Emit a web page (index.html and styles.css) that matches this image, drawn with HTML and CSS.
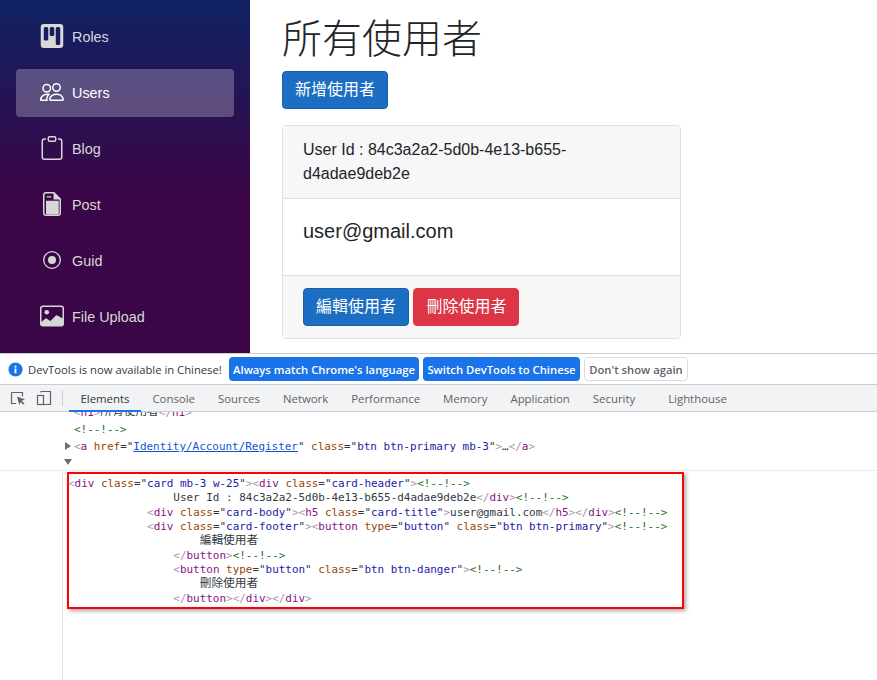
FILE: index.html
```html
<!DOCTYPE html>
<html lang="zh-Hant">
<head>
<meta charset="utf-8">
<title>Users</title>
<link rel="stylesheet" href="styles.css">
</head>
<body>
<div class="page">
  <div class="app">
    <nav class="sidebar">
      <a class="nav-item"><svg class="ico" viewBox="0 0 16 16"><path d="M2.5 0a2 2 0 0 0-2 2v12a2 2 0 0 0 2 2h11a2 2 0 0 0 2-2V2a2 2 0 0 0-2-2h-11zm5 2h1a1 1 0 0 1 1 1v4a1 1 0 0 1-1 1h-1a1 1 0 0 1-1-1V3a1 1 0 0 1 1-1zm-5 1a1 1 0 0 1 1-1h1a1 1 0 0 1 1 1v7a1 1 0 0 1-1 1h-1a1 1 0 0 1-1-1V3zm9-1h1a1 1 0 0 1 1 1v10a1 1 0 0 1-1 1h-1a1 1 0 0 1-1-1V3a1 1 0 0 1 1-1z"/></svg><span class="nav-label">Roles</span></a>
      <a class="nav-item active"><svg class="ico" viewBox="0 0 16 16"><path d="M15 14s1 0 1-1-1-4-5-4-5 3-5 4 1 1 1 1h8Zm-7.978-1A.261.261 0 0 1 7 12.996c.001-.264.167-1.03.76-1.72C8.312 10.629 9.282 10 11 10c1.717 0 2.687.63 3.24 1.276.593.69.758 1.457.76 1.72l-.008.002a.274.274 0 0 1-.014.002H7.022ZM11 7a2 2 0 1 0 0-4 2 2 0 0 0 0 4Zm3-2a3 3 0 1 1-6 0 3 3 0 0 1 6 0ZM6.936 9.28a5.88 5.88 0 0 0-1.23-.247A7.35 7.35 0 0 0 5 9c-4 0-5 3-5 4 0 .667.333 1 1 1h4.216A2.238 2.238 0 0 1 5 13c0-1.01.377-2.042 1.09-2.904.243-.294.526-.569.846-.816ZM4.92 10A5.493 5.493 0 0 0 4 13H1c0-.26.164-1.03.76-1.724.545-.636 1.492-1.256 3.16-1.275ZM1.5 5.5a3 3 0 1 1 6 0 3 3 0 0 1-6 0Zm3-2a2 2 0 1 0 0 4 2 2 0 0 0 0-4Z"/></svg><span class="nav-label">Users</span></a>
      <a class="nav-item"><svg class="ico" viewBox="0 0 16 16"><path d="M4 1.5H3a2 2 0 0 0-2 2V14a2 2 0 0 0 2 2h10a2 2 0 0 0 2-2V3.5a2 2 0 0 0-2-2h-1v1h1a1 1 0 0 1 1 1V14a1 1 0 0 1-1 1H3a1 1 0 0 1-1-1V3.5a1 1 0 0 1 1-1h1v-1z"/><path d="M9.5 1a.5.5 0 0 1 .5.5v1a.5.5 0 0 1-.5.5h-3a.5.5 0 0 1-.5-.5v-1a.5.5 0 0 1 .5-.5h3zm-3-1A1.5 1.5 0 0 0 5 1.5v1A1.5 1.5 0 0 0 6.5 4h3A1.5 1.5 0 0 0 11 2.5v-1A1.5 1.5 0 0 0 9.5 0h-3z"/></svg><span class="nav-label">Blog</span></a>
      <a class="nav-item"><svg class="ico" viewBox="0 0 16 16"><path d="M4 0h5.5L14 4.5V14a2 2 0 0 1-2 2H4a2 2 0 0 1-2-2V2a2 2 0 0 1 2-2zm0 1a1 1 0 0 0-1 1v12a1 1 0 0 0 1 1h8a1 1 0 0 0 1-1V5H9V1H4zm.5 4.9h7.6a.4.4 0 0 1 .4.4v8a.5.5 0 0 1-.5.5H4.5a.5.5 0 0 1-.5-.5V6.3a.4.4 0 0 1 .5-.4zM4.5 2.8h3v.8h-3z"/></svg><span class="nav-label">Post</span></a>
      <a class="nav-item"><svg class="ico" viewBox="0 0 24 24"><path d="M12 20.5a8.500 8.500 0 1 1 0-17 8.500 8.500 0 0 1 0 17zm0 1.500a10 10 0 1 0 0-20 10 10 0 0 0 0 20z" transform="translate(1.200 1.200) scale(.9)"/><circle cx="12" cy="12" r="4"/></svg><span class="nav-label">Guid</span></a>
      <a class="nav-item"><svg class="ico" viewBox="0 0 16 16"><path d="M6.002 5.500a1.500 1.500 0 1 1-3 0 1.500 1.500 0 0 1 3 0z"/><path d="M2.002 1a2 2 0 0 0-2 2v10a2 2 0 0 0 2 2h12a2 2 0 0 0 2-2V3a2 2 0 0 0-2-2h-12zm12 1a1 1 0 0 1 1 1v6.500l-3.777-1.947a.5.5 0 0 0-.577.093l-3.710 3.710-2.660-1.772a.5.5 0 0 0-.630.062L1.002 12V3a1 1 0 0 1 1-1h12z"/></svg><span class="nav-label">File Upload</span></a>
    </nav>
    <main class="content">
      <h1 class="title">所有使用者</h1>
      <a class="btn btn-primary">新增使用者</a>
      <section class="card">
        <div class="card-header">User Id : 84c3a2a2-5d0b-4e13-b655-d4adae9deb2e</div>
        <div class="card-body"><h5 class="card-title">user@gmail.com</h5></div>
        <div class="card-footer">
          <button class="btn btn-primary">編輯使用者</button>
          <button class="btn btn-danger">刪除使用者</button>
        </div>
      </section>
    </main>
  </div>
  <div class="devtools">
    <div class="infobar">
      <svg class="info-ico" viewBox="0 0 16 16"><circle cx="8" cy="8" r="7.500" fill="#1a73e8"/><rect x="7" y="7" width="2" height="5" fill="#fff"/><rect x="7" y="4" width="2" height="2" fill="#fff"/></svg>
      <span class="info-text">DevTools is now available in Chinese!</span>
      <button class="dt-btn dt-primary">Always match Chrome's language</button>
      <button class="dt-btn dt-primary">Switch DevTools to Chinese</button>
      <button class="dt-btn dt-plain">Don't show again</button>
    </div>
    <div class="tabbar">
      <div class="tool-icons">
        <svg class="tool" viewBox="0 0 18 18"><path d="M2.500 3.500h11v4M7 14.500H2.500v-11" fill="none" stroke="#5f6368" stroke-width="1.200"/><path d="M8 7.500l8 3-3.300 1.300 2.800 2.800-1.100 1.100-2.800-2.800L10.300 16z" fill="#5f6368"/></svg>
        <svg class="tool" viewBox="0 0 18 18"><path d="M6 3.500V2.500h9.500v13H9" fill="none" stroke="#5f6368" stroke-width="1.200"/><rect x="2.500" y="6.500" width="6" height="9" fill="none" stroke="#5f6368" stroke-width="1.200"/></svg>
      </div>
      <span class="tab-sep"></span>
      <div class="tabs">
        <span class="tab tab-active">Elements</span>
        <span class="tab">Console</span>
        <span class="tab">Sources</span>
        <span class="tab">Network</span>
        <span class="tab">Performance</span>
        <span class="tab">Memory</span>
        <span class="tab">Application</span>
        <span class="tab">Security</span>
        <span class="tab tab-last">Lighthouse</span>
      </div>
    </div>
    <div class="tree-top">
<div class="line l-h1"><span class="b">&lt;</span><span class="t">h1</span><span class="b">&gt;</span><span class="cjk">所有使用者</span><span class="b">&lt;/</span><span class="t">h1</span><span class="b">&gt;</span></div>
<div class="line l-cm"><span class="c">&lt;!--!--&gt;</span></div>
<div class="line l-a"><i class="tri tri-r"></i><span class="b">&lt;</span><span class="t">a</span> <span class="a">href</span>="<span class="link">Identity/Account/Register</span>" <span class="a">class</span>="<span class="v">btn btn-primary mb-3</span>"<span class="b">&gt;</span>…<span class="b">&lt;/</span><span class="t">a</span><span class="b">&gt;</span></div>
<div class="line l-tri"><i class="tri tri-d"></i></div>
    </div>
    <div class="tree-bottom">
      <div class="gutter"></div>
      <pre class="selected"><code class="code"><span class="b">&lt;</span><span class="t">div</span> <span class="a">class</span>="<span class="v">card mb-3 w-25</span>"<span class="b">&gt;&lt;</span><span class="t">div</span> <span class="a">class</span>="<span class="v">card-header</span>"<span class="b">&gt;</span><span class="c">&lt;!--!--&gt;</span>
                User Id : 84c3a2a2-5d0b-4e13-b655-d4adae9deb2e<span class="b">&lt;/</span><span class="t">div</span><span class="b">&gt;</span><span class="c">&lt;!--!--&gt;</span>
            <span class="b">&lt;</span><span class="t">div</span> <span class="a">class</span>="<span class="v">card-body</span>"<span class="b">&gt;&lt;</span><span class="t">h5</span> <span class="a">class</span>="<span class="v">card-title</span>"<span class="b">&gt;</span>user@gmail.com<span class="b">&lt;/</span><span class="t">h5</span><span class="b">&gt;&lt;/</span><span class="t">div</span><span class="b">&gt;</span><span class="c">&lt;!--!--&gt;</span>
            <span class="b">&lt;</span><span class="t">div</span> <span class="a">class</span>="<span class="v">card-footer</span>"<span class="b">&gt;&lt;</span><span class="t">button</span> <span class="a">type</span>="<span class="v">button</span>" <span class="a">class</span>="<span class="v">btn btn-primary</span>"<span class="b">&gt;</span><span class="c">&lt;!--!--&gt;</span>
                    <span class="cjk">編輯使用者</span>
                <span class="b">&lt;/</span><span class="t">button</span><span class="b">&gt;</span><span class="c">&lt;!--!--&gt;</span>
                <span class="b">&lt;</span><span class="t">button</span> <span class="a">type</span>="<span class="v">button</span>" <span class="a">class</span>="<span class="v">btn btn-danger</span>"<span class="b">&gt;</span><span class="c">&lt;!--!--&gt;</span>
                    <span class="cjk">刪除使用者</span>
                <span class="b">&lt;/</span><span class="t">button</span><span class="b">&gt;&lt;/</span><span class="t">div</span><span class="b">&gt;&lt;/</span><span class="t">div</span><span class="b">&gt;</span></code></pre>
    </div>
  </div>
</div>
</body>
</html>
```
FILE: styles.css
```css
* { box-sizing: border-box; }
html, body { margin: 0; padding: 0; background: #fff; }
body { font-family: "Liberation Sans", "Noto Sans CJK TC", sans-serif; overflow: hidden; }
.page { width: 877px; height: 680px; display: flex; flex-direction: column; overflow: hidden; }

.app { height: 353px; display: flex; flex: none; overflow: hidden; }
.sidebar {
  width: 250px; flex: none; padding: 13px 16px 0;
  display: flex; flex-direction: column; gap: 8px;
  background: linear-gradient(180deg, #0f2263 0, #3a0647 190px);
}
.nav-item {
  height: 48px; flex: none; display: flex; align-items: center;
  padding: 0 0 2px 24px; border-radius: 4px;
  color: #d7d7d7; font-size: 14.400px; fill: #d7d7d7;
}
.nav-item.active { background: rgba(255,255,255,.25); color: #fff; fill: #fff; }
.nav-label { padding-top: 2px; }
.ico { width: 24px; height: 24px; margin-right: 8px; flex: none; }

.content { flex: 1; padding: 0 32px; min-width: 0; }
.title {
  margin: 12px 0 11px; font-size: 40px; line-height: 48px; font-weight: 300;
  color: #212529; font-family: "Noto Sans CJK TC", sans-serif;
}
.btn {
  display: inline-block; height: 38px; padding: 4px 12px 8px; border: 1px solid transparent; border-radius: 4px;
  font: 16px/24px "Noto Sans CJK TC", sans-serif; color: #fff; vertical-align: middle; width: 106px; text-align: center;
}
.btn-primary { background: #1b6ec2; border-color: #1861ac; }
.btn-danger { background: #dc3545; border-color: #dc3545; }
.card { margin-top: 16px; width: 399px; border: 1px solid #dfdfdf; border-radius: 4px; color: #212529; overflow: hidden; }
.card-header { background: #f7f7f7; padding: 12px 20px; font-size: 16px; line-height: 24px; border-bottom: 1px solid #dfdfdf; }
.card-body { height: 76px; padding: 20px; }
.card-title { margin: 0; font-size: 20px; line-height: 24px; font-weight: 400; }
.card-footer { background: #f7f7f7; padding: 12px 20px; height: 63px; border-top: 1px solid #dfdfdf; font-size: 16px; }
.card-footer .btn { padding-bottom: 10px; }

.devtools { flex: 1; display: flex; flex-direction: column; border-top: 1px solid #cbcdd1; font-family: "Open Sans", sans-serif; color: #5f6368; min-height: 0; }
.infobar { height: 31px; flex: none; display: flex; align-items: center; padding: 0 0 0 8px; border-bottom: 1px solid #cbcdd1; background: #fff; }
.info-ico { width: 15px; height: 15px; margin-right: 5px; flex: none; }
.info-text { font-size: 11.250px; color: #303942; width: 201px; white-space: nowrap; }
.dt-btn { height: 24px; border-radius: 4px; font: 600 11.250px "Open Sans", sans-serif; padding: 0; white-space: nowrap; margin-right: 4px; }
.dt-primary { background: #1a73e8; color: #fff; border: 0; }
.dt-primary:nth-of-type(1) { width: 190px; }
.dt-primary:nth-of-type(2) { width: 157px; }
.dt-plain { background: #fff; color: #5f6368; border: 1px solid #dadce0; width: 104px; }
.tabbar { height: 27px; flex: none; display: flex; align-items: stretch; background: #f1f3f4; border-bottom: 1px solid #cbcdd1; }
.tool-icons { display: flex; align-items: center; gap: 8px; padding-left: 9px; width: 62px; }
.tool { width: 18px; height: 18px; flex: none; }
.tab-sep { width: 1px; height: 16px; margin-top: 5px; background: #cbcdd1; flex: none; }
.tabs { display: flex; margin-left: 6px; }
.tab { font-size: 11.380px; line-height: 27px; padding: 0 11.500px; color: #5f6368; white-space: nowrap; position: relative; }
.tab-active { color: #303942; }
.tab-active::after { content: ""; position: absolute; left: 0; right: 0; bottom: -1px; height: 2px; background: #1a73e8; }
.tab-last { margin-left: 10px; }

.tree-top { height: 59px; flex: none; overflow: hidden; border-bottom: 1px solid #ececec; font: 10.950px/17px "DejaVu Sans Mono", "Noto Sans CJK TC", monospace; color: #303942; }
.line { height: 17px; white-space: pre; position: relative; }
.l-h1 { margin-top: -8px; padding-left: 74px; }
.l-cm, .l-a { padding-left: 74px; }
.tri { position: absolute; width: 0; height: 0; }
.tri-r { left: 65px; top: 4px; border-left: 6px solid #6e6e6e; border-top: 4px solid transparent; border-bottom: 4px solid transparent; }
.tri-d { left: 64px; top: 4px; border-top: 6px solid #6e6e6e; border-left: 4px solid transparent; border-right: 4px solid transparent; }
.tree-bottom { flex: 1; display: flex; min-height: 0; }
.gutter { width: 63px; flex: none; border-right: 1px solid #e4e4e4; }
.selected {
  margin: 1px 0 0 4px; width: 617px; height: 137px; border: 2px solid #f00; padding: 3px 0 0 0;
  font: 10.950px/14.400px "DejaVu Sans Mono", "Noto Sans CJK TC", monospace; color: #303942; background: #fff;
  box-shadow: 2px 2px 4px rgba(0,0,0,.35);
}
.code { display: block; margin-left: -1px; font: inherit; }
.cjk { font-size: 11.700px; line-height: 0; position: relative; top: -1px; }
.b { color: #a894a6; }
.t { color: #881280; }
.a { color: #994500; }
.v { color: #1a1aa6; }
.c { color: #236e25; }
.link { color: #1155cc; text-decoration: underline; }
```
